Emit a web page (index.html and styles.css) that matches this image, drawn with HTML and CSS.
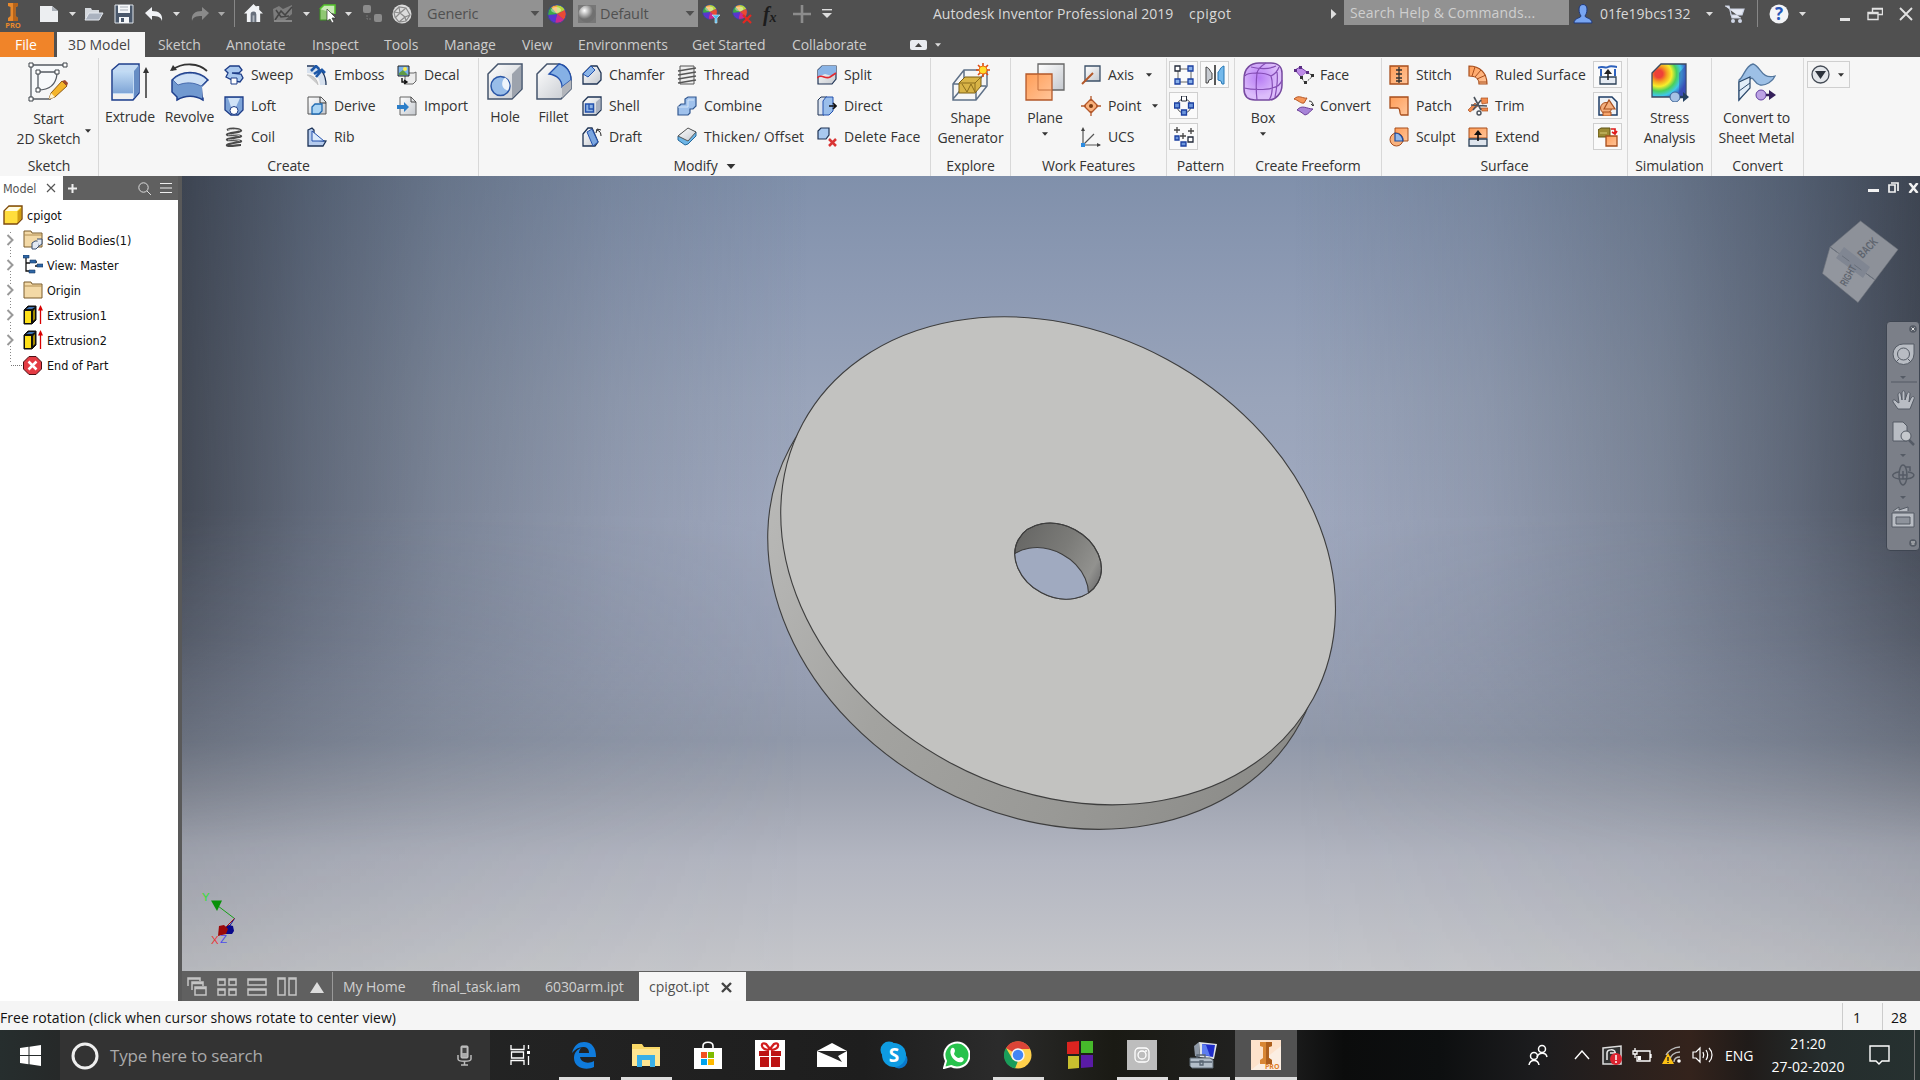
FILE: index.html
```html
<!DOCTYPE html>
<html lang="en">
<head>
<meta charset="utf-8">
<title>Autodesk Inventor Professional 2019</title>
<link rel="stylesheet" href="styles.css">
</head>
<body>
<svg class="defs" width="0" height="0">
  <defs>
    <linearGradient id="blue" x1="0" y1="0" x2="0" y2="1"><stop offset="0" stop-color="#c3dcf5"/><stop offset="1" stop-color="#7fa5d6"/></linearGradient>
    <linearGradient id="grey" x1="0" y1="0" x2="1" y2="1"><stop offset="0" stop-color="#fff"/><stop offset="1" stop-color="#c4c8ce"/></linearGradient>
    <linearGradient id="orange" x1="0" y1="0" x2="1" y2="1"><stop offset="0" stop-color="#ff9d57"/><stop offset="1" stop-color="#ffc59a"/></linearGradient>
    <radialGradient id="violet" cx=".4" cy=".4"><stop offset="0" stop-color="#b77cf5"/><stop offset="1" stop-color="#dcbcfb"/></radialGradient>
    <radialGradient id="stress" cx=".2" cy=".3" r=".95"><stop offset=".12" stop-color="#ee4038"/><stop offset=".25" stop-color="#f5a020"/><stop offset=".4" stop-color="#f6ee2c"/><stop offset=".55" stop-color="#49d05c"/><stop offset=".7" stop-color="#40c8e8"/><stop offset=".88" stop-color="#3c50c0"/></radialGradient>
    <radialGradient id="ball" cx=".35" cy=".3"><stop offset="0" stop-color="#fff"/><stop offset="1" stop-color="#707070"/></radialGradient>
  </defs>
  <symbol id="caret" viewBox="0 0 7 4"><path d="M0 0h7L3.500 4z" fill="currentColor"/></symbol>
  <symbol id="wheel" viewBox="0 0 20 20"><circle cx="10" cy="10" r="9.500" fill="#3555b8"/><path d="M10 10V1a9 9 0 0 1 8 5z" fill="#b6d53e"/><path d="M10 10 18 6a9 9 0 0 1-1 10z" fill="#e94a35"/><path d="M10 10l7 6a9 9 0 0 1-9 3z" fill="#c92a91"/><path d="M10 10 8 19a9 9 0 0 1-7-8z" fill="#5a35d0"/><path d="M10 10 1 11a9 9 0 0 1 3-8z" fill="#3faa48"/><path d="M10 10 4 3a9 9 0 0 1 6-2z" fill="#f4a93c"/><circle cx="10" cy="10" r="9.300" fill="none" stroke="#3d4c78" stroke-width="1"/><ellipse cx="9" cy="6" rx="5" ry="3" fill="#fff" opacity=".4"/></symbol>
  <symbol id="cube" viewBox="0 0 20 20"><path d="M1 6 6 1h13v13l-5 5H1z" fill="url(#grey)" stroke="#1e3354" stroke-width="1.300"/><path d="M14 6v12l4.500-4.500V2z" fill="#aab1bf"/></symbol>
  <symbol id="folder" viewBox="0 0 20 18"><path d="M1 3V1h7l1 2h10v14H1z" fill="#f3d9a6" stroke="#7a5c2c"/><path d="M1 5h18" stroke="#b28f55"/></symbol>
  <symbol id="extr" viewBox="0 0 20 20"><path d="M1 5 5 1h8v14l-4 4H1z" fill="#111" stroke="#111"/><path d="M2 6h6v12H2z" fill="#ffe11a"/><path d="M3 4l3-2h6L9 4z" fill="#3d70b0"/><path d="M10 6l2-2v10l-2 2z" fill="#a58a00"/><path d="M17.500 19V4" stroke="#d80000" stroke-width="1.300"/><path d="M15 5.500h5L17.500 0z" fill="#d80000"/></symbol>
  <symbol id="chev" viewBox="0 0 8 12"><path d="M1.500 1l5 5-5 5" fill="none" stroke="#999" stroke-width="2"/></symbol>
</svg>

<header class="titlebar">
  <svg width="20" height="25" viewBox="0 0 20 25"><path d="M5 0h10v3l-2.500 1v9L15 15v3H5v-3l2.500-2V4L5 3z" fill="#e8892c"/><path d="M10 0h5v3l-2.500 1v9L15 15v3h-5z" fill="#b7641a"/><text x="10" y="24.500" text-anchor="middle" class="logo-text">PRO</text></svg>
  <svg width="20" height="18" viewBox="0 0 20 18"><path d="M1 1h12l6 5v11H1z" fill="#eceef1"/><path d="M13 1v5h6z" fill="#aab0b8"/></svg>
  <svg class="caret" width="7" height="4"><use href="#caret"/></svg>
  <svg width="20" height="16" viewBox="0 0 20 16"><path d="M1 13V2h6l1 2h7v4" fill="#d4d8dd"/><path d="M5 7h14l-4 7H1z" fill="#aab2bf" stroke="#e4e8ee"/></svg>
  <svg width="20" height="20" viewBox="0 0 20 20"><path d="M1 1h18v18H1z" fill="#4a586b" stroke="#dde3ea"/><path d="M4 1h12v8H4z" fill="#f4f6f8"/><path d="M5 13h10v6H5z" fill="#f4f6f8"/><path d="M7 14h3v4H7z" fill="#4a586b"/><path d="M6 3h8M6 6h8" stroke="#a7aeb8"/></svg>
  <svg width="20" height="16" viewBox="0 0 20 16"><path d="M1 7l7-6v4c7 0 11 3 10 10-1-4-4-5-10-5v4z" fill="#f0f2f5"/></svg>
  <svg class="caret" width="7" height="4"><use href="#caret"/></svg>
  <svg width="20" height="16" viewBox="0 0 20 16"><path d="M19 7l-7-6v4C5 5 1 8 2 15c1-4 4-5 10-5v4z" fill="#8a8a8a"/></svg>
  <svg class="caret dim" width="7" height="4"><use href="#caret"/></svg>
  <i class="bar"></i>
  <svg width="19" height="19" viewBox="0 0 20 20"><path d="M10 0 0 10h3v9h14v-9h3l-4-4V2h-3v1z" fill="#f1f3f6"/><path d="M7 11a3 3 0 0 1 6 0v8H7z" fill="#68707c"/><path d="M9 12h2v7H9z" fill="#aeb4bd"/></svg>
  <svg width="20" height="19" viewBox="0 0 20 19"><path d="M0 5l6-3 4 3 9-4v9l-8 7-10 1z" fill="#7c7c7c"/><path d="M2 16 8 7l4 4 7-8M3 6l5 7 8-1" fill="none" stroke="#454545" stroke-width="1.600"/><path d="M1 17h18" stroke="#888" stroke-width="2"/></svg>
  <svg class="caret" width="7" height="4"><use href="#caret"/></svg>
  <svg width="19" height="20" viewBox="0 0 19 20"><path d="M2 4h12v12H2z" fill="#8fc773" stroke="#3d9022"/><path d="M2 5 6 1h11v9" fill="#c9e9b7" stroke="#53c22b" stroke-width="1.500"/><path d="M9 5v12l3-2 2 4 2-1-2-4h4z" fill="#fff" stroke="#333" stroke-width=".7"/></svg>
  <svg class="caret" width="7" height="4"><use href="#caret"/></svg>
  <svg width="20" height="19" viewBox="0 0 20 19"><rect x="1" y="1" width="8" height="8" rx="2" fill="#8b8b8b"/><rect x="12" y="10" width="8" height="8" rx="2" fill="#8b8b8b"/><path d="M5 11v4h5" stroke="#777" fill="none" stroke-dasharray="2 1"/></svg>
  <svg width="20" height="20" viewBox="0 0 20 20"><circle cx="10" cy="10" r="9.500" fill="#dcdcdc"/><path d="M2 8l5-5 7 1 4 7-4 6-7 1-4-5zM7 3l1 6 6-5M8 9l-6-1M8 9l5 4 5-2M13 13l1 4M8 9l-5 5M13 13l-6 5" fill="none" stroke="#8a8a8a" stroke-width="1.200"/></svg>
  <div class="combo"><span>Generic</span><svg width="10" height="5"><use href="#caret"/></svg></div>
  <svg width="20" height="20"><use href="#wheel"/></svg>
  <div class="combo"><svg width="18" height="18" viewBox="0 0 18 18"><path d="M0 0h18v18H0z" fill="#777"/><circle cx="9" cy="9" r="8.500" fill="url(#ball)"/></svg><span>Default</span><svg width="10" height="5"><use href="#caret"/></svg></div>
  <svg width="20" height="20" viewBox="0 0 20 20"><use href="#wheel" width="16" height="16"/><path d="M10 11h8l-3 3v5h-2v-5z" fill="#4db9ef" stroke="#d7f1ff" stroke-width=".6"/></svg>
  <svg width="21" height="20" viewBox="0 0 21 20"><use href="#wheel" width="16" height="16"/><path d="M11 11l8 8m0-8-8 8" stroke="#e32821" stroke-width="2.200"/></svg>
  <span class="fx">f<small>x</small></span>
  <svg width="18" height="18" viewBox="0 0 18 18"><path d="M9 0v18M0 9h18" stroke="#8c8c8c" stroke-width="2.600"/></svg>
  <svg width="10" height="9" viewBox="0 0 10 9"><path d="M0 .7h10" stroke="#ddd" stroke-width="1.400"/><path d="M0 4h10L5 9z" fill="#ddd"/></svg>
  <span class="title">Autodesk Inventor Professional 2019</span>
  <span class="title doc">cpigot</span>
  <svg width="6" height="10" viewBox="0 0 6 10"><path d="M0 0v10l5.500-5z" fill="#ddd"/></svg>
  <div class="search">Search Help &amp; Commands...</div>
  <svg width="20" height="20" viewBox="0 0 20 20"><path d="M6 5c0-6 8-6 8 0 0 4-1 5-2 7 0 2 7 2 7 7H1c0-5 7-5 7-7-1-2-2-3-2-7z" fill="#78a5f2" stroke="#1f397c"/></svg>
  <span class="user">01fe19bcs132</span>
  <svg class="caret" width="7" height="4"><use href="#caret"/></svg>
  <svg width="21" height="20" viewBox="0 0 21 20"><path d="M1 2h4l3 12h9M6 5h14l-2 6H7z" fill="#e5e9f3" stroke="#c9d0e0" stroke-width="1.200"/><circle cx="9" cy="17" r="2" fill="#cfd6e6"/><circle cx="16" cy="17" r="2" fill="#cfd6e6"/></svg>
  <i class="bar"></i>
  <svg width="20" height="20" viewBox="0 0 20 20"><circle cx="10" cy="10" r="9.500" fill="#f3f4f7"/><text x="10" y="16" text-anchor="middle" class="help-text">?</text></svg>
  <svg class="caret" width="7" height="4"><use href="#caret"/></svg>
  <svg class="win-min" width="10" height="3"><path d="M0 0h10v3H0z" fill="#e2e2e2"/></svg>
  <svg width="16" height="14" viewBox="0 0 16 14"><path d="M5.500 5V1.500h10v6H11M1 5.500h10v7H1zM1 6.500h10M5 2h10" fill="none" stroke="#e2e2e2" stroke-width="1.400"/></svg>
  <svg width="14" height="14" viewBox="0 0 14 14"><path d="M1 1l12 12M13 1 1 13" stroke="#e2e2e2" stroke-width="1.900"/></svg>
</header>

<nav class="tabs">
  <span class="file">File</span><span class="active">3D Model</span><span>Sketch</span><span>Annotate</span><span>Inspect</span><span>Tools</span><span>Manage</span><span>View</span><span>Environments</span><span>Get Started</span><span>Collaborate</span>
  <svg width="17" height="10" viewBox="0 0 17 10"><rect width="17" height="10" rx="2" fill="#e9ecf1"/><path d="M5 7h7L8.500 3z" fill="#444"/></svg>
  <svg class="caret" width="6" height="4"><use href="#caret"/></svg>
</nav>

<section class="ribbon">
  <div class="group g-sketch">
    <div class="body">
      <div class="big"><svg width="40" height="40" viewBox="0 0 40 40"><path d="M3 37V3h34M3 37h20M10 10h19v2C28 22 22 28 10 28z" fill="#f7f9fb" stroke="#555b63" stroke-width="1.300"/><path d="M1 1h4v4H1zM35 1h4v4h-4zM1 35h4v4H1zM8 8h4v4H8zM27 8h4v4h-4zM8 26h4v4H8z" fill="#fff" stroke="#3d4249"/><path d="M23 31 34 19l5 5-12 11-6 2z" fill="#f5b52a" stroke="#8d5a16"/><path d="M34 19l3-1 3 3-1 3z" fill="#a34b2c"/><path d="M21 37l2-6 4 4z" fill="#fff3d0"/></svg><span>Start<br>2D Sketch</span></div>
      <svg class="caret dark side" width="6" height="4"><use href="#caret"/></svg>
    </div>
    <div class="name">Sketch</div>
  </div>

  <div class="group g-create">
    <div class="body">
      <div class="big"><svg width="40" height="40" viewBox="0 0 40 40"><path d="M2 8 9 2h20v29l-6 7H2z" fill="#c3daf3" stroke="#1f3f8c" stroke-width="1.500"/><path d="M3 9h20v22H3z" fill="url(#blue)"/><path d="M3 32h20v5H3z" fill="#f1f1f1"/><path d="M24 9l5-6v27l-5 6z" fill="#668dc5"/><path d="M36 36V9" stroke="#333" stroke-width="1.500"/><path d="M33 11h6l-3-6z" fill="#333"/></svg><span>Extrude</span></div>
      <div class="big"><svg width="42" height="40" viewBox="0 0 42 40"><path d="M3 8C14 0 30 1 38 9" fill="none" stroke="#333" stroke-width="1.800"/><path d="M1 9 4 3l4 5z" fill="#333"/><path d="M3 18C12 8 30 8 39 18l-5 6v14c-8-5-18-5-26 0V35l-5-5z" fill="#7199d0" stroke="#1f3f8c" stroke-width="1.500"/><path d="M4 18C12 9 30 9 38 18l-6 6c-8-4-15-4-23-1z" fill="#cfe1f6" stroke="#2c4f9a" stroke-width=".7"/><path d="M33 25l6-6v12l-5 5z" fill="#f8f8f8"/></svg><span>Revolve</span></div>
      <div class="list">
        <div><svg width="20" height="20" viewBox="0 0 20 20"><path d="M1 5 6 1h9l3 4-3 3H8l9 1 2 4-3 4-6-1-8-4 2-4z" fill="#a8c8ee" stroke="#1d3c87" stroke-width="1.300"/><path d="M7 13h6v6H7z" fill="#fff" stroke="#1d3c87"/></svg>Sweep</div>
        <div><svg width="20" height="20" viewBox="0 0 20 20"><path d="M1 1h18v13l-5 5H7l-6-5z" fill="#7ea4d8" stroke="#1d3c87" stroke-width="1.300"/><path d="M4 2h12l-4 9H7z" fill="#cfe2f7"/><circle cx="10" cy="14.500" r="4" fill="#fff" stroke="#1d3c87"/></svg>Loft</div>
        <div><svg width="20" height="20" viewBox="0 0 20 20"><path d="M3 3c5-2.500 13-1 14 .5S4 6 3 7.500s13 0 14 1.500S4 11 3 12.500s13 0 14 1.500-13 2-14 4 11 0 14 0" fill="none" stroke="#4a4a4a" stroke-width="2.200"/><path d="M4 3c5-1 10-.5 12 .5M4 8c5-1 10 0 12 1M4 13c5-1 10 0 12 1" fill="none" stroke="#ddd" stroke-width=".8"/></svg>Coil</div>
      </div>
      <div class="list">
        <div><svg width="20" height="20" viewBox="0 0 20 20"><path d="M0 2C10 1 19 8 19 20h-6C13 12 8 8 0 8z" fill="#d7e1ee"/><path d="M0 1h7c8 3 12 9 12 19" fill="none" stroke="#1d3358" stroke-width="1.300"/><path d="M0 10c6 0 10 4 11 10" fill="#ccc" stroke="#bbb"/><path d="M4 6 9 1l3 3M7 9l6-4M9 12l6-7 3 3" fill="none" stroke="#1c57a8" stroke-width="2.600"/></svg>Emboss</div>
        <div><svg width="20" height="20" viewBox="0 0 20 20"><path d="M1 1h13l5 5v12H1z" fill="url(#grey)" stroke="#555"/><path d="M13 1v6h6" fill="none" stroke="#333"/><path d="M5 11l3-3h7v7l-3 3H5z" fill="#a9d4f4" stroke="#1f6ab1" stroke-width="1.300"/></svg>Derive</div>
        <div><svg width="20" height="20" viewBox="0 0 20 20"><path d="M1 3 5 1l2 2v10l12 1-3 5H1z" fill="#b5cbed" stroke="#1d3358" stroke-width="1.300"/><path d="M5 4v10h12z" fill="#dcebfc" stroke="#2351ad"/></svg>Rib</div>
      </div>
      <div class="list">
        <div><svg width="20" height="20" viewBox="0 0 20 20"><path d="M8 8h9l2-1v9l-3 3H8z" fill="#ececec" stroke="#666"/><path d="M1 1h11v10H1z" fill="#7bb2e9" stroke="#222"/><path d="M2 8l4-3 5 5H2z" fill="#5f9b45"/><circle cx="8" cy="4" r="2" fill="#ffec4d"/><path d="M5 13v4h5m-3-2 3 2-3 2" fill="none" stroke="#111" stroke-width="1.400"/></svg>Decal</div>
        <div><svg width="20" height="20" viewBox="0 0 20 20"><path d="M3 1h11l5 5v13H3z" fill="url(#grey)" stroke="#666"/><path d="M14 1v5h5" fill="none" stroke="#444"/><path d="M0 9h7V6l5 5-5 5v-3H0z" fill="#2b7ec9"/></svg>Import</div>
      </div>
    </div>
    <div class="name">Create</div>
  </div>

  <div class="group g-modify">
    <div class="body">
      <div class="big"><svg width="38" height="40" viewBox="0 0 38 40"><path d="M2 12 12 2h24v25L26 37H2z" fill="url(#grey)" stroke="#44546c" stroke-width="1.500"/><path d="M26 12v24l9-9V3z" fill="#9da3ad"/><circle cx="14.500" cy="24" r="9.500" fill="#98bde9" stroke="#2a56a6" stroke-width="1.500"/><path d="M19 15.500a9.500 9.500 0 0 1 3 13c-6-1-8-8-3-13z" fill="#eef4fb"/></svg><span>Hole</span></div>
      <div class="big"><svg width="38" height="40" viewBox="0 0 38 40"><path d="M2 12 12 2h12c7 1 12 8 12 16v9L26 37H2z" fill="url(#grey)" stroke="#44546c" stroke-width="1.500"/><path d="M14 12 24 2c7 1 12 8 12 16l-9 7c0-7-5-12-13-13z" fill="#86b1e5" stroke="#2351ad" stroke-width="1.300"/><path d="M27 25v11l9-9v-9z" fill="#b2b5bb"/></svg><span>Fillet</span></div>
      <div class="list">
        <div><svg width="20" height="20" viewBox="0 0 20 20"><path d="M1 9 9 1h6l4 7v7l-4 4H1z" fill="url(#grey)" stroke="#1e3354" stroke-width="1.300"/><path d="M1 9 9 1l4 4-7 7z" fill="#8bb5e8" stroke="#2351ad"/></svg>Chamfer</div>
        <div><svg width="20" height="20" viewBox="0 0 20 20"><use href="#cube"/><path d="M3.500 8h8v8h-8z" fill="#8cb2e5" stroke="#2351ad" stroke-width="1.500"/><path d="M7 8v5h4" fill="none" stroke="#2351ad" stroke-width="1.300"/></svg>Shell</div>
        <div><svg width="20" height="20" viewBox="0 0 20 20"><path d="M1 7 6 1h4l6 14-3 4H1z" fill="url(#grey)" stroke="#1e3354" stroke-width="1.300"/><path d="M5 5l5-3 6 13-5 4z" fill="#7ba6df" stroke="#2351ad"/><path d="M19 9c0-3-1-5-4-6m-1 3 1-4 4 1" fill="none" stroke="#222"/></svg>Draft</div>
      </div>
      <div class="list">
        <div><svg width="20" height="20" viewBox="0 0 20 20"><path d="M3 1h14v18H3z" fill="#eee" stroke="#555"/><path d="M1 6l18-3M1 10l18-3M1 14l18-3M1 18l18-3" stroke="#555" stroke-width="1.500"/></svg>Thread</div>
        <div><svg width="20" height="20" viewBox="0 0 20 20"><path d="M1 11l3-3h4V3l3-2h8v9l-3 3h-3v4l-2 2H1z" fill="#9fc1ec" stroke="#31578f" stroke-width="1.200"/><path d="M1 11h10V4h6" fill="none" stroke="#d4e5f8"/></svg>Combine</div>
        <div class="wide"><svg width="20" height="20" viewBox="0 0 20 20"><path d="M1 9v4l7 5 3-1 8-8V5l-8-3z" fill="#6db5e6" stroke="#25689a"/><path d="M1 9 11 1l8 4-8 9z" fill="url(#grey)" stroke="#555"/></svg>Thicken/ Offset</div>
      </div>
      <div class="list">
        <div><svg width="20" height="20" viewBox="0 0 20 20"><path d="M1 5l4-4h14v13l-4 5H1z" fill="url(#grey)" stroke="#1e3354" stroke-width="1.200"/><path d="M1 5l4-4h14v7l-4 3-7-2-7 3z" fill="#8ab4e6"/><path d="M0 13c5-5 8 2 13-1l6-4" fill="none" stroke="#e22830" stroke-width="1.600"/></svg>Split</div>
        <div><svg width="20" height="20" viewBox="0 0 20 20"><path d="M1 4 4 1h6v15l-3 3H1z" fill="#d9e2ef" stroke="#1e3354"/><path d="M6 5l3-4h7v14l-4 4H6z" fill="#9abeeb" stroke="#2351ad"/><path d="M12 10h7m-3-3 3 3-3 3" fill="none" stroke="#111" stroke-width="1.600"/></svg>Direct</div>
        <div class="wide"><svg width="20" height="20" viewBox="0 0 20 20"><path d="M1 4l3-3h8v7l-3 4H1z" fill="#a9c9f0" stroke="#1e3354" stroke-width="1.200"/><path d="M12 12l7 7m0-7-7 7" stroke="#d93434" stroke-width="2.500"/></svg>Delete Face</div>
      </div>
    </div>
    <div class="name">Modify <svg class="caret dark" width="10" height="5"><use href="#caret"/></svg></div>
  </div>

  <div class="group g-explore">
    <div class="body">
      <div class="big"><svg width="40" height="40" viewBox="0 0 40 40"><path d="M2 22 13 8h23v16L25 38H2zM2 22h23v16M25 22 36 8M13 8v15M2 37l11-13h22" fill="none" stroke="#5f7188" stroke-width="1.500"/><path d="M8 21l6-6h16v9l-6 7H8z" fill="#d9b447" stroke="#7b5e14"/><path d="M8 21h16l6-6M24 21v9M11 22l5 8 4-8 4 8" fill="none" stroke="#8b6d1c"/><path d="M32 1v14M25 8h14M27 3l10 10M37 3 27 13" stroke="#df4b12" stroke-width="1.600"/><circle cx="32" cy="8" r="4" fill="#ffdc2c" stroke="#ec7314"/></svg><span>Shape<br>Generator</span></div>
    </div>
    <div class="name">Explore</div>
  </div>

  <div class="group g-work">
    <div class="body">
      <div class="big"><svg width="40" height="40" viewBox="0 0 40 40"><path d="M13 2h26v26H13z" fill="url(#grey)" stroke="#666" stroke-width="1.300"/><path d="M1 12h26v26H1z" fill="url(#orange)" stroke="#b3582a" stroke-width="1.300"/><path d="M13 12v16h14" fill="none" stroke="#c4713f"/></svg><span>Plane</span><svg class="caret dark" width="6" height="4"><use href="#caret"/></svg></div>
      <div class="list">
        <div><svg width="20" height="20" viewBox="0 0 20 20"><path d="M4 1h15v15H4z" fill="url(#grey)" stroke="#3c5068" stroke-width="1.300"/><path d="M1 19 12 8" stroke="#b3582a" stroke-width="2"/></svg>Axis<svg class="caret dark c1" width="6" height="4"><use href="#caret"/></svg></div>
        <div><svg width="20" height="20" viewBox="0 0 20 20"><path d="M10 3l7 7-7 7-7-7zM10 0v5M10 15v5M0 10h5M15 10h5" fill="#f9b07b" stroke="#b3582a" stroke-width="1.300"/><circle cx="10" cy="10" r="2" fill="#7c3a10"/></svg>Point<svg class="caret dark c2" width="6" height="4"><use href="#caret"/></svg></div>
        <div><svg width="20" height="20" viewBox="0 0 20 20"><path d="M2 18V2M2 18h17M2 18 13 7" fill="none" stroke="#555" stroke-width="1.200"/><path d="M0 4h4L2 0zM16 16v4l4-2z" fill="#444"/><path d="M0 16h4v4H0z" fill="#2b8be0"/></svg>UCS</div>
      </div>
    </div>
    <div class="name">Work Features</div>
  </div>

  <div class="group g-pattern">
    <div class="body">
      <div class="tile"><svg width="20" height="20" viewBox="0 0 20 20"><path d="M4 4h13v13H4z" fill="none" stroke="#666"/><path d="M1 1h5v5H1z" fill="#fff" stroke="#222a3a" stroke-width="1.300"/><path d="M14 1h5v5h-5zM1 14h5v5H1zM14 14h5v5h-5z" fill="#8ab1ea" stroke="#1b3fa0" stroke-width="1.300"/></svg></div>
      <div class="tile"><svg width="20" height="20" viewBox="0 0 20 20"><path d="M1 2c4 1 4 5 6 6v6l-3 1-1 3H1z" fill="#c8ccd2" stroke="#444"/><path d="M10 0v20" stroke="#222" stroke-width="1.500"/><path d="M19 1c-4 1-4 5-6 6v8l3 1 1 3h2z" fill="#74b9eb" stroke="#2577b5"/></svg></div>
      <div class="tile"><svg width="20" height="20" viewBox="0 0 20 20"><circle cx="10" cy="10" r="7" fill="none" stroke="#555"/><path d="M7.500 0h5v5h-5z" fill="#fff" stroke="#222a3a"/><path d="M.5 7h5v5h-5zM14.500 7h5v5h-5zM7.500 14h5v5h-5z" fill="#6b95db" stroke="#1b3fa0" stroke-width="1.300"/></svg></div>
      <i></i>
      <div class="tile"><svg width="20" height="20" viewBox="0 0 20 20"><path d="M3 0v6M0 3h6M17 1v6M14 4h6M9 6v6M6 9h6" stroke="#444" stroke-width="1.300"/><path d="M1 9h4v4H1zM7 15h5v4H7z" fill="#6b95db" stroke="#1b3fa0" stroke-width="1.300"/><path d="M14 10h5v5h-5z" fill="#fff" stroke="#222a3a" stroke-width="1.300"/></svg></div>
    </div>
    <div class="name">Pattern</div>
  </div>

  <div class="group g-free">
    <div class="body">
      <div class="big"><svg width="40" height="40" viewBox="0 0 40 40"><path d="M1 17C1 6 8 1 16 1h12c7 0 11 4 11 10v12c0 9-7 15-13 15H12C4 38 1 33 1 27z" fill="url(#violet)" stroke="#76499f" stroke-width="1.500"/><path d="M2 14c2-4 20-4 26 0 2 6 2 19-2 24M28 14c4-2 7-6 8-9M1 26c8 2 22 2 28 0 5-1 9-4 10-8M14 11c-1 8-1 18 0 27M14 11c1-4 4-7 9-10M8 5c9 2 19 2 25-1M34 10c1 7 0 15-2 25" fill="none" stroke="#854eb5" stroke-width="1.200"/></svg><span>Box</span><svg class="caret dark" width="6" height="4"><use href="#caret"/></svg></div>
      <div class="list">
        <div><svg width="20" height="20" viewBox="0 0 20 20"><path d="M6 2l7 5-6 5-6-7z" fill="#bd8be8" stroke="#7a43a8"/><path d="M13 7l6 4-8 7-4-6" fill="#f5f5f5" stroke="#444" stroke-dasharray="2 1"/><path d="M5 1h3v3H5zM0 4h3v3H0zM12 6h3v3h-3z" fill="#5a2d83"/><path d="M17 9h3v3h-3zM10 16h3v3h-3zM6 11h3v3H6z" fill="#333"/></svg>Face</div>
        <div><svg width="20" height="20" viewBox="0 0 20 20"><path d="M0 3c5-5 9 0 13-1L10 7C7 8 4 4 0 3z" fill="#f5975a" stroke="#b65624"/><path d="M3 14c5-6 10-1 16-1-3 2-4 5-8 6-3-2-5-4-8-5z" fill="#a784d8" stroke="#6d4198"/><path d="M15 5c3 0 4 2 4 5m-2-2 2 2 2-3" fill="none" stroke="#333"/></svg>Convert</div>
      </div>
    </div>
    <div class="name">Create Freeform</div>
  </div>

  <div class="group g-surface">
    <div class="body">
      <div class="list">
        <div><svg width="20" height="20" viewBox="0 0 20 20"><path d="M1 1h18v18H1z" fill="url(#orange)" stroke="#a74e1d" stroke-width="1.300"/><path d="M10 2v16M7 5h6M7 9h6M7 13h6M7 16h6" stroke="#333" stroke-width="1.300"/></svg>Stitch</div>
        <div><svg width="20" height="20" viewBox="0 0 20 20"><path d="M1 1h18v18h-7c-2-1 0-6-3-7H1z" fill="url(#orange)" stroke="#a74e1d" stroke-width="1.300"/></svg>Patch</div>
        <div><svg width="20" height="20" viewBox="0 0 20 20"><path d="M6 1h13v13H6z" fill="url(#orange)" stroke="#a74e1d"/><circle cx="7.500" cy="12.500" r="6.500" fill="#f8b27e" stroke="#a74e1d"/><path d="M6 6c5 0 8 4 8 8H6z" fill="#93b8e9" stroke="#1d4b9b" stroke-width="1.200"/></svg>Sculpt</div>
      </div>
      <div class="list">
        <div class="ruled"><svg width="20" height="20" viewBox="0 0 20 20"><path d="M1 1c11 0 18 7 18 18h-8c0-6-3-8-10-8z" fill="url(#orange)" stroke="#a74e1d" stroke-width="1.200"/><path d="M4 11 7 2M7 12l6-7M9 14l9-4M11 17l8 0" stroke="#a74e1d"/></svg>Ruled Surface</div>
        <div><svg width="20" height="20" viewBox="0 0 20 20"><path d="M0 14 7 7l3 3-8 6zM13 2h7v5l-6 1zM13 12h7v3h-6z" fill="#f08b4e" stroke="#a74e1d" stroke-width=".7"/><path d="M6 1l7 13M13 4 5 14M3 9l16 1" stroke="#4c535c" stroke-width="1.600"/><circle cx="11" cy="17" r="2" fill="none" stroke="#4c535c" stroke-width="1.400"/></svg>Trim</div>
        <div><svg width="20" height="20" viewBox="0 0 20 20"><path d="M1 1h18v10H1z" fill="url(#orange)" stroke="#a74e1d"/><path d="M1 12h18v7H1z" fill="#dfe5ed" stroke="#2b4057" stroke-width="1.300"/><path d="M10 14V6" stroke="#111" stroke-width="1.600"/><path d="M6 8h8l-4-5z" fill="#111"/></svg>Extend</div>
      </div>
      <div class="tiles">
        <div class="tile"><svg width="20" height="20" viewBox="0 0 20 20"><path d="M0 3c5-3 7 1 10-1s6 0 9 0M3 4v7M17 4v7" fill="none" stroke="#2d61bd" stroke-width="2"/><path d="M2 12h16v7H2z" fill="#e6ebf2" stroke="#2b4057" stroke-width="1.300"/><path d="M10 15V7" stroke="#222" stroke-width="1.600"/><path d="M6 9h8l-4-5z" fill="#222"/></svg></div>
        <div class="tile"><svg width="20" height="20" viewBox="0 0 20 20"><path d="M1 1h13l5 5v13H1z" fill="#eef1f5" stroke="#1e3d66" stroke-width="1.500"/><circle cx="8" cy="12" r="5.500" fill="#f3ae7d" stroke="#a74e1d"/><path d="M6 13l5-9 6 9z" fill="#f3ae7d" stroke="#a74e1d" stroke-width="1.200"/><path d="M5 16h8v4H5z" fill="#f5a36a" stroke="#a74e1d"/></svg></div>
        <div class="tile"><svg width="20" height="20" viewBox="0 0 20 20"><path d="M0 3l3-2h9v9H0z" fill="#9b8a34" stroke="#5f5315"/><path d="M2 6h7" stroke="#d8ca77"/><path d="M8 9h11v10H8z" fill="url(#orange)" stroke="#a74e1d" stroke-width="1.300"/><path d="M13 2h4v4m-3-1 3 2 2-3" fill="none" stroke="#e01b1b" stroke-width="1.700"/></svg></div>
      </div>
    </div>
    <div class="name">Surface</div>
  </div>

  <div class="group g-sim">
    <div class="body">
      <div class="big"><svg width="40" height="40" viewBox="0 0 40 40"><path d="M2 11 11 2h25v33H2z" fill="url(#stress)" stroke="#3b4a60" stroke-width="1.300"/><path d="M29 11l7-8v26l-7 6z" fill="#3349ac" opacity=".5"/><circle cx="25" cy="35" r="5" fill="#a7c2e5" stroke="#3b6396"/><path d="M30 35h5" stroke="#24405f" stroke-width="2.500"/><path d="M33 30v10l6-5z" fill="#24405f"/></svg><span>Stress<br>Analysis</span></div>
    </div>
    <div class="name">Simulation</div>
  </div>

  <div class="group g-conv">
    <div class="body">
      <div class="big"><svg width="40" height="40" viewBox="0 0 40 40"><path d="M2 18C7 15 8 4 16 2c8 2 8 16 22 12-2 5-9 10-15 9-7-2-6-9-10-6-3 1-2 11-11 21z" fill="#9dc0e6" stroke="#54779e" stroke-width="1.300"/><path d="M2 20l11-5v11L2 38z" fill="#e2edf8" stroke="#2c496b" stroke-width="1.200"/><path d="M2 29l11-8" stroke="#2c496b"/><circle cx="24" cy="33" r="5" fill="#bca2e4" stroke="#6240a0"/><path d="M29 33h5" stroke="#35205b" stroke-width="2.500"/><path d="M32 28v10l7-5z" fill="#35205b"/></svg><span>Convert to<br>Sheet Metal</span></div>
    </div>
    <div class="name">Convert</div>
  </div>

  <div class="display"><svg width="19" height="19" viewBox="0 0 19 19"><circle cx="9.500" cy="9.500" r="8.500" fill="#e3e6ea" stroke="#444b55" stroke-width="1.300"/><path d="M4 6h11l-5.500 8z" fill="#2c323b"/></svg><svg class="caret dark" width="6" height="4"><use href="#caret"/></svg></div>
</section>

<main class="work">
  <aside class="browser">
    <div class="panel-head">
      <div class="panel-tab">Model <svg width="10" height="10" viewBox="0 0 10 10"><path d="M1 1l8 8M9 1 1 9" stroke="#555" stroke-width="1.200"/></svg></div>
      <svg class="add" width="9" height="9" viewBox="0 0 9 9"><path d="M4.500 0v9M0 4.500h9" stroke="#eee" stroke-width="2"/></svg>
      <svg width="13" height="13" viewBox="0 0 13 13"><circle cx="5.500" cy="5.500" r="4.700" fill="none" stroke="#ddd"/><path d="M9 9l4 4" stroke="#ddd"/></svg>
      <svg width="12" height="10" viewBox="0 0 12 10"><path d="M0 .5h12M0 5h12M0 9.500h12" stroke="#eee" stroke-width="1.200"/></svg>
    </div>
    <ul class="tree">
      <li class="root"><svg width="20" height="20" viewBox="0 0 20 20"><path d="M1 6 6 1h13v13l-5 5H1z" fill="#ffdd3c" stroke="#7d4a10" stroke-width="1.400"/><path d="M2 6l4-4h12l-4 4z" fill="#fffbe2"/><path d="M14.500 6.500 18 3v11l-3.500 4z" fill="#d09c11"/></svg>cpigot</li>
      <li><svg class="chev" width="8" height="12"><use href="#chev"/></svg><svg width="20" height="20" viewBox="0 0 20 20"><use href="#folder" width="20" height="18"/><path d="M9 13l3-2h4v5l-3 3H9z" fill="#e2e9f3" stroke="#394d6c"/><path d="M14 9h5v5l-3 2" fill="#e2e9f3" stroke="#394d6c"/></svg>Solid Bodies(1)</li>
      <li><svg class="chev" width="8" height="12"><use href="#chev"/></svg><svg width="20" height="20" viewBox="0 0 20 20"><path d="M3 3v13h4M3 8h4M11 7h3M12 11h3" fill="none" stroke="#111" stroke-width="1.300"/><path d="M0 0h6v3H0zM7 5h6v3H7zM14 9h6v3h-6zM6 15h6v3H6z" fill="#2e66a5" stroke="#173a63" stroke-width=".6"/></svg>View: Master</li>
      <li><svg class="chev" width="8" height="12"><use href="#chev"/></svg><svg width="20" height="18"><use href="#folder"/></svg>Origin</li>
      <li><svg class="chev" width="8" height="12"><use href="#chev"/></svg><svg width="20" height="20"><use href="#extr"/></svg>Extrusion1</li>
      <li><svg class="chev" width="8" height="12"><use href="#chev"/></svg><svg width="20" height="20"><use href="#extr"/></svg>Extrusion2</li>
      <li class="end"><i></i><svg width="19" height="19" viewBox="0 0 19 19"><path d="M6 .5h7L18.500 6v7L13 18.500H6L.5 13V6z" fill="#e43b43" stroke="#4b1015"/><path d="M5.500 5.500l8 8m0-8-8 8" stroke="#fff" stroke-width="2.500"/></svg>End of Part</li>
    </ul>
  </aside>

  <div class="stage">
    <div class="viewport">
      <div class="vignette"></div>
      <svg class="scene" viewBox="182 176 1738 795">
        <defs>
          <linearGradient id="side" x1="-290" y1="0" x2="290" y2="0" gradientUnits="userSpaceOnUse"><stop offset="0" stop-color="#b9b9b7"/><stop offset=".12" stop-color="#b2b2b0"/><stop offset=".35" stop-color="#a3a3a0"/><stop offset=".7" stop-color="#999996"/><stop offset="1" stop-color="#8c8c89"/></linearGradient>
          <linearGradient id="bore" x1="-45" y1="0" x2="45" y2="0" gradientUnits="userSpaceOnUse"><stop offset="0" stop-color="#686866"/><stop offset=".5" stop-color="#7b7b78"/><stop offset=".88" stop-color="#92928f"/><stop offset="1" stop-color="#777"/></linearGradient>
          <clipPath id="holeclip"><ellipse rx="45.200" ry="35.700" transform="translate(1058.100 561.100) rotate(28.300)"/></clipPath>
        </defs>
        <g stroke="#3e3e3e" stroke-width="1.100">
          <ellipse rx="289.900" ry="229" transform="translate(1045.100 585.300) rotate(28.300)" fill="url(#side)"/>
          <ellipse rx="289.900" ry="229" transform="translate(1058.100 560.800) rotate(28.300)" fill="#c2c2c0"/>
          <ellipse rx="45.200" ry="35.700" transform="translate(1058.100 561.100) rotate(28.300)" fill="url(#bore)"/>
          <g clip-path="url(#holeclip)"><ellipse rx="45.200" ry="35.700" transform="translate(1045.100 585.600) rotate(28.300)" fill="#a0aac0"/></g>
          <ellipse rx="45.200" ry="35.700" transform="translate(1058.100 561.100) rotate(28.300)" fill="none"/>
        </g>
        <g class="viewcube">
          <path d="M1860.500 221 1898 249.500 1875 280 1830 247z" fill="#8d9199" stroke="#6f747c" stroke-width=".6"/>
          <path d="M1830 247l45 33-17 22.500-35.500-29z" fill="#92969e" stroke="#6f747c" stroke-width=".6"/>
          <path d="M1844 247l26 20-7 11-27-20z" fill="#808692"/>
          <path d="M1830 247l45 33" stroke="#69707b" stroke-dasharray="9 6"/>
          <text transform="translate(1862.500 259) rotate(-46)" class="cube-text" textLength="23" lengthAdjust="spacingAndGlyphs">BACK</text>
          <text transform="translate(1846 287) rotate(-60)" class="cube-text small" textLength="22" lengthAdjust="spacingAndGlyphs">RIGHT</text>
        </g>
        <g class="triad">
          <path d="M234.500 918.500 218 906" stroke="#16a016"/><path d="M211 900.500h11l-5 10.500z" fill="#099109"/>
          <path d="M234.500 918.500 229 927" stroke="#1010a0"/><path d="M225 927l4-2 4 1 1 5-2 3-7 0z" fill="#08088a"/><path d="M234.500 918.500 224 929" stroke="#a01010"/><path d="M219 926l5-1 4 4-2 5-8 2z" fill="#9b0808"/>
          <text x="202" y="901" fill="#32df32">Y</text><text x="211" y="944" fill="#e63c3c">X</text><text x="220" y="943" fill="#4d4dea">Z</text>
        </g>
      </svg>
      <div class="mdi">
        <svg width="11" height="3"><path d="M0 0h11v3H0z" fill="#f2f2f2"/></svg>
        <svg width="11" height="11" viewBox="0 0 11 11"><path d="M1 3h6v7H1zM3 1h7v8" fill="none" stroke="#f2f2f2" stroke-width="1.700"/></svg>
        <svg width="11" height="10" viewBox="0 0 11 10"><path d="M1.500 0l8 10M9.500 0l-8 10" stroke="#f2f2f2" stroke-width="2.500"/></svg>
      </div>
      <div class="navbar">
        <svg width="33" height="229" viewBox="0 0 33 229" fill="#b8bcc3" stroke="#555b65">
          <circle cx="26" cy="7" r="3.800" fill="#555b65" stroke="none"/><path d="M24.500 5.500l3 3m0-3-3 3" stroke="#ddd"/>
          <path d="M16 22h11v10a10 10 0 0 1-21 0 10 10 0 0 1 10-10z"/><circle cx="16.500" cy="32" r="6"/><path d="M12 37l-3 3M21 37l3 3"/>
          <path d="M13 54h6l-3 3z" fill="#555b65" stroke="none"/><path d="M4 60h26" stroke="#555b65"/>
          <path d="M11 87 6 80c-1-3 2-3 4 0l2 1-1-8c0-3 3-3 3 0l1 5v-7c0-3 3-3 3 0v7l2-6c1-3 3-2 3 0l-1 8 2-4c2-3 4-1 3 1l-4 10h-12z"/>
          <path d="M6 100h10l4 4v15H6z"/><circle cx="19" cy="114" r="5" fill="#c5c8cd"/><path d="M22 118l5 5" stroke-width="2.500"/>
          <path d="M13 132h6l-3 3z" fill="#555b65" stroke="none"/>
          <g fill="none" stroke-width="1.500"><ellipse cx="16" cy="153" rx="4" ry="10"/><path d="M12 150c-9 1-9 7 4 7s14-6 5-7M16 149v8M12 153h8"/><path d="M18 145h5v4"/></g>
          <path d="M13 174h6l-3 3z" fill="#555b65" stroke="none"/>
          <path d="M5 191h22v14H5z"/><path d="M9 195h14v7H9z" fill="#8e939c"/><path d="M6 189l6-4v3l9-3v4"/>
          <circle cx="26" cy="221" r="3.800" fill="#555b65" stroke="none"/><path d="M24 220h4M24.500 222h3" stroke="#ddd"/>
        </svg>
      </div>
    </div>
    <div class="doctabs">
      <div class="arrange">
        <svg width="20" height="20" viewBox="0 0 20 20"><path d="M1 9V1h12v3M5 13V5h11v4M8 10h11v8H8zM8 11.500h11M5 6.500h11M1 2h12" fill="none" stroke="#c4c4c4" stroke-width="1.500"/></svg>
        <svg width="20" height="20" viewBox="0 0 20 20"><path d="M1 2h7v6H1zM12 2h7v6h-7zM1 12h7v6H1zM12 12h7v6h-7zM1 3h7M12 3h7M1 13h7M12 13h7" fill="none" stroke="#c4c4c4" stroke-width="1.500"/></svg>
        <svg width="20" height="20" viewBox="0 0 20 20"><path d="M1 2h18v6H1zM1 12h18v6H1zM1 3h18M1 13h18" fill="none" stroke="#c4c4c4" stroke-width="1.500"/></svg>
        <svg width="20" height="20" viewBox="0 0 20 20"><path d="M1 1h7v17H1zM12 1h7v17h-7zM1 2h7M12 2h7" fill="none" stroke="#c4c4c4" stroke-width="1.500"/></svg>
        <svg width="14" height="11" viewBox="0 0 14 11"><path d="M0 11h14L7 0z" fill="#ddd"/></svg>
      </div>
      <span>My Home</span><span>final_task.iam</span><span>6030arm.ipt</span>
      <span class="current">cpigot.ipt <svg width="11" height="11" viewBox="0 0 11 11"><path d="M1 1l9 9M10 1l-9 9" stroke="#444" stroke-width="2.400"/></svg></span>
    </div>
  </div>
</main>

<footer class="status"><span>Free rotation (click when cursor shows rotate to center view)</span><b>1</b><b>28</b></footer>

<div class="taskbar">
  <div class="start"><svg width="21" height="21" viewBox="0 0 21 21"><path d="M0 3l8.500-1.200V10H0zM9.500 1.700 21 0v10H9.500zM0 11h8.500v8.200L0 18zM9.500 11H21v10L9.500 19.300z" fill="#fff"/></svg></div>
  <div class="cortana"><svg width="28" height="28" viewBox="0 0 28 28"><circle cx="14" cy="14" r="12" fill="none" stroke="#eee" stroke-width="3"/></svg><span>Type here to search</span><svg width="15" height="21" viewBox="0 0 15 21"><rect x="4" y="1" width="7" height="12" rx="1" fill="#aaa" stroke="#ccc"/><path d="M5.500 3h4v5h-4z" fill="#444"/><path d="M1 10v4c0 3 13 3 13 0v-4M7.500 16v4M4 20h7" fill="none" stroke="#bbb" stroke-width="1.500"/></svg></div>
  <div class="taskview"><svg width="21" height="20" viewBox="0 0 21 20"><path d="M1 0v4.500h13V0M1 20v-4.500h13V20M1.500 7h12v6h-12zM18.500 0v4M18.500 11v9" fill="none" stroke="#fff" stroke-width="1.300"/><path d="M17 6h3v3h-3z" fill="#fff"/></svg></div>
  <div class="apps">
    <div class="run"><svg width="26" height="28" viewBox="0 0 26 28"><path d="M1 12C3 4 8 1 13 1c8 0 12 6 12 15H9c1 6 9 7 14 4v6c-8 4-20 1-20-9 0-6 4-9 7-10-1 1-2 3-2 5h10c0-5-3-6-6-6-4 0-8 2-11 6z" fill="#0f7bdc"/></svg></div>
    <div class="run"><svg width="28" height="24" viewBox="0 0 28 24"><path d="M0 1h10l2 3h16v19H0z" fill="#f9d867"/><path d="M0 6h28v17H0z" fill="#ffe692"/><path d="M5 12h18v12h-5v-7h-8v7H5z" fill="#3ab0e8"/></svg></div>
    <div><svg width="30" height="30" viewBox="0 0 30 30"><path d="M10 9V6c0-5 10-5 10 0v3" fill="none" stroke="#fff" stroke-width="1.600"/><path d="M1 8h28v21l-28 0z" fill="#fff"/><path d="M8 12h6v6H8z" fill="#f25022"/><path d="M15 12h6v6h-6z" fill="#7fba00"/><path d="M8 19h6v6H8z" fill="#00a4ef"/><path d="M15 19h6v6h-6z" fill="#ffb900"/></svg></div>
    <div><svg width="30" height="30" viewBox="0 0 30 30"><path d="M0 0h30v30H0z" fill="#fff"/><path d="M4 11h10v5H4zM16 11h10v5H16zM5 17h9v10H5zM16 17h9v10h-9z" fill="#bd1414"/><path d="M14 10C4 9 6 1 11 4l4 5 4-5c5-3 7 5-3 6" fill="none" stroke="#d21c1c" stroke-width="2.300"/></svg></div>
    <div><svg width="30" height="24" viewBox="0 0 30 24"><path d="M0 8 15 0l15 8v16H0z" fill="#fff"/><path d="M0 8h30l-9 5 4 6-11-5z" fill="#242424"/></svg></div>
    <div><svg width="28" height="28" viewBox="0 0 28 28"><circle cx="9" cy="9" r="8.500" fill="#0f9ce0"/><circle cx="19" cy="19" r="8.500" fill="#0a78cb"/><circle cx="14" cy="14" r="12" fill="#0e9be2"/><text x="14" y="21" text-anchor="middle" class="skype">S</text></svg></div>
    <div><svg width="27" height="28" viewBox="0 0 27 28"><path d="M1 27l2-7A12.500 12.500 0 1 1 8 25z" fill="#27c24c" stroke="#fff" stroke-width="2"/><path d="M8 8c2-3 4 0 4 2l-1 3c1 2 3 4 5 4l2-1c3 1 4 3 1 5C13 23 5 14 8 8z" fill="#fff"/></svg></div>
    <div class="run"><svg width="28" height="28" viewBox="0 0 28 28"><circle cx="14" cy="14" r="13.500" fill="#ffd04b"/><path d="M14 14 2 7a13.500 13.500 0 0 1 24 1H14z" fill="#db4437"/><path d="M2 7l7 12 5 1-3 7.500A13.500 13.500 0 0 1 2 7z" fill="#1a9d5a"/><circle cx="14" cy="14" r="6" fill="#4285f4" stroke="#f4f4f4" stroke-width="1.500"/></svg></div>
    <div><svg width="28" height="30" viewBox="0 0 28 30"><path d="M1 2l12-1v13H1z" fill="#db2420"/><path d="M15 1h12v12H15z" fill="#46b92b"/><path d="M2 16h11v12l-11 1z" fill="#c8c02f"/><path d="M15 15h12v12l-12 1z" fill="#5a1ba6"/></svg></div>
    <div class="run"><svg width="30" height="30" viewBox="0 0 30 30"><path d="M0 0h30v30H0z" fill="#bdbdbd"/><g fill="none" stroke="#fff" stroke-width="1.300"><rect x="8" y="8" width="14" height="14" rx="4"/><circle cx="15" cy="15" r="4"/></g><circle cx="19" cy="11" r="1" fill="#fff"/></svg></div>
    <div class="run"><svg width="30" height="30" viewBox="0 0 30 30"><path d="M10 2l18 2-3 15-14-2z" fill="#dfe3e8"/><path d="M13 4l13 1-2 12-11-2z" fill="#1f2cc9"/><path d="M17 5l4 11-8-1V4z" fill="#5d7df0"/><path d="M10 2 5 6l1 10 5 1z" fill="#8e98a5"/><path d="M1 18h20l3 2v8H3l-2-2z" fill="#b3bec9" stroke="#5e6a75"/><path d="M8 18v-3h8v3M1 22h22M11 21h3v4h-3z" fill="none" stroke="#596673" stroke-width="1.300"/></svg></div>
    <div class="run on"><svg width="30" height="30" viewBox="0 0 30 30"><path d="M0 0h30v30H0z" fill="#fde2cb"/><path d="M0 30 30 6v24z" fill="#fbeee2"/><path d="M9 2h12v4l-3 1v11l3 2v4H9v-4l3-2V7L9 6z" fill="#d88634"/><path d="M15 2h6v4l-3 1v11l3 2v4h-6z" fill="#ad5f1d"/><text x="28.500" y="29" text-anchor="end" class="pro">PRO</text></svg></div>
  </div>
  <div class="tray">
    <svg width="20" height="22" viewBox="0 0 20 22" fill="none" stroke="#fff" stroke-width="1.500"><circle cx="14" cy="5" r="3.500"/><path d="M9 13c2-5 9-5 10 0"/><circle cx="6" cy="12" r="3.500"/><path d="M1 21c1-6 9-6 10 0"/></svg>
    <svg width="16" height="10" viewBox="0 0 16 10"><path d="M1 9l7-8 7 8" fill="none" stroke="#fff" stroke-width="1.400"/></svg>
    <svg width="20" height="20" viewBox="0 0 20 20"><path d="M1 3l18-2v18H1z" fill="#333" stroke="#ddd" stroke-width="1.500"/><path d="M5 15V8c0-4 8-4 8-1v5M8 8h6" fill="none" stroke="#eee" stroke-width="1.500"/><circle cx="14" cy="14" r="6" fill="#dc2430"/><path d="M14 10v5M14 16v2" stroke="#fff" stroke-width="1.500"/></svg>
    <svg width="20" height="15" viewBox="0 0 20 15"><path d="M5 3h13v10H5V8M19 6v4M3 0v3M1 3h4v3H1zM3 6v4" fill="none" stroke="#fff" stroke-width="1.300"/><path d="M6 8h3v4H6z" fill="#fff"/></svg>
    <svg width="20" height="18" viewBox="0 0 20 18"><path d="M4 9C6 5 12 1 18 1M8 14c0-4 4-8 10-8M12 16c0-3 2-5 6-5" fill="none" stroke="#bbb" stroke-width="1.400"/><circle cx="17" cy="15" r="1.800" fill="#fff"/><path d="M0 18h12L6 7z" fill="#fdc114"/><path d="M6 11v4M6 16v1" stroke="#222" stroke-width="1.400"/></svg>
    <svg width="21" height="18" viewBox="0 0 21 18"><path d="M1 6h3l4-4v14l-4-4H1zM11 6c1 2 1 4 0 6M14 4c2 3 2 7 0 10M17 2c4 4 4 10 0 14" fill="none" stroke="#fff" stroke-width="1.200"/></svg>
    <span>ENG</span>
    <span class="clock">21:20<br>27-02-2020</span>
    <svg width="21" height="20" viewBox="0 0 21 20"><path d="M1 1h19v15h-7l-3 3-3-3H1z" fill="none" stroke="#fff" stroke-width="1.400"/></svg>
    <i></i>
  </div>
</div>
</body>
</html>
```
FILE: styles.css
```css
* { box-sizing: border-box; }
body {
  margin: 0; width: 1920px; height: 1080px; overflow: hidden;
  display: flex; flex-direction: column;
  font: 14px/20px "Open Sans", "Noto Sans", sans-serif;
  letter-spacing: -0.12px; color: #333; background: #fff;
}
svg { display: block; flex: none; }
.defs { position: absolute; }

.titlebar {
  height: 32px; flex: none; background: #505050; padding-left: 3px; color: #d9d9d9;
  display: grid; align-items: center; grid-template-rows: 27px; white-space: nowrap;
  grid-template-columns: 36px 30px 15px 30px 30px 29px 17px 28px 16px 10px 29px 30px 15px 27px 17px 30px 26px 129px 26px 129px 30px 31px 30px 29px 111px 256px 142px 13px 229px 27px 106px 18px 33px 12px 30px 41px 27px 32px 21px;
}
.titlebar > svg:first-child { margin-top: 3px; }
.caret { color: #ddd; }
.caret.dim { color: #aaa; }
.caret.dark { color: #333; }
.logo-text { font: 700 7.500px "Open Sans", sans-serif; fill: #e8892c; letter-spacing: 0; }
.help-text { font: 700 17px "Open Sans", sans-serif; fill: #2756b8; }
.bar { width: 1px; height: 27px; background: #878787; }
.combo { width: 125px; height: 27px; background: #929292; color: #505050; display: flex; align-items: center; padding: 0 3px 0 9px; font-size: 14.500px; }
.combo span { flex: 1; }
.combo svg:first-child { margin: 0 4px 0 -4px; }
.fx { display: flex; align-items: flex-end; font: italic 700 20px/24px "Liberation Serif", serif; color: #1c1c1c; height: 24px; }
.fx small { font-size: 14px; line-height: 16px; }
.title { padding-top: 1px; letter-spacing: .02px; }
.title.doc { letter-spacing: .45px; }
.search { width: 225px; height: 25px; margin-top: -2px; padding: 2px 6px; line-height: 21px; background: #929292; color: #cfcfcf; letter-spacing: .15px; }
.user { letter-spacing: 0; }
.win-min { margin-top: 11px; }

.tabs {
  height: 25px; flex: none; background: #505050; color: #ccc; display: grid; align-items: center; line-height: 25px; white-space: nowrap; letter-spacing: -.08px;
  grid-template-columns: 57px 101px 68px 86px 72px 60px 78px 56px 114px 100px 118px 25px 20px;
}
.file { width: 54px; background: #f08429; color: #fff; padding-left: 15px; }
.active { width: 88px; background: #f6f6f6; color: #444; padding-left: 11px; }

.ribbon { height: 119px; flex: none; background: #f6f6f6; display: flex; padding-top: 1px; white-space: nowrap; }
.group { display: flex; flex-direction: column; border-right: 1px solid #d8d8d8; }
.group .body { height: 98px; padding-top: 1px; display: grid; align-items: start; justify-content: start; }
.name { flex: 1; display: flex; justify-content: center; align-items: center; gap: 8px; }
.big { display: flex; flex-direction: column; align-items: center; text-align: center; padding-top: 3px; }
.big span { margin-top: 5px; }
.big .caret { margin-top: 4px; }
.list div { height: 31px; display: flex; align-items: center; gap: 7px; }
.list .wide, .list .ruled { letter-spacing: .08px; }
.tile { width: 29px; height: 27px; margin: 2px 0; border: 1px solid #cfcfcf; background: #fafafa; display: grid; place-items: center; }
.g-sketch { width: 99px; }
.g-sketch .body { grid-template-columns: 81px 10px; padding-left: 7px; }
.g-sketch .side { margin: 70px 0 0 -3px; }
.g-sketch .big span { margin-top: 7px; padding-left: 2px; }
.g-create { width: 380px; }
.g-create .body { grid-template-columns: 60px 59px 83px 90px 80px; padding-left: 1px; }
.g-create .body > .list { margin-left: 5px; }
.g-modify { width: 452px; }
.g-modify .body { grid-template-columns: 48px 49px 95px 140px 110px; padding-left: 2px; }
.g-modify .body > .list { margin-left: 4px; }
.g-explore { width: 80px; }
.g-explore .body, .g-sim .body, .g-conv .body { grid-template-columns: 100%; }
.g-explore span, .g-work .big span, .g-free .big span, .g-sim span, .g-conv span { margin-top: 6px; }
.g-work { width: 156px; }
.g-work .body { grid-template-columns: 68px 80px; }
.g-work .list { margin-left: 2px; }
.g-work .list div { gap: 7px; }
.c1 { margin-left: 5px; } .c2 { margin-left: 4px; }
.g-pattern { width: 68px; }
.g-pattern .body { grid-template-columns: 31px 31px; padding-left: 2px; align-content: start; }
.g-free { width: 147px; }
.g-free .body { grid-template-columns: 56px 90px; }
.g-free .list { margin-left: 3px; }
.g-free .list div { gap: 6px; }
.g-surface { width: 246px; }
.g-surface .body { grid-template-columns: 79px 126px 30px; padding-left: 7px; }
.g-surface .tiles { display: grid; grid-template-rows: 31px 31px 31px; margin-left: -1px; }
.g-sim { width: 84px; }
.g-conv { width: 92px; }
.g-conv .big { padding-right: 2px; }
.display { width: 43px; height: 27px; margin: 3px 0 0 3px; border: 1px solid #cfcfcf; display: flex; align-items: center; padding-left: 3px; gap: 8px; }

.work { height: 825px; flex: none; display: flex; }
.browser { width: 182px; background: #fff; border-right: 4px solid #595959; font: 12.500px/25px "DejaVu Sans Condensed", "DejaVu Sans", sans-serif; letter-spacing: -.02px; color: #111; }
.panel-head { height: 24px; background: #606060; display: flex; align-items: center; gap: 9px; padding-right: 6px; }
.panel-tab { width: 63px; height: 24px; background: #fff; color: #555; padding-left: 3px; display: flex; align-items: center; justify-content: space-between; padding-right: 7px; letter-spacing: -.1px; }
.panel-head .add { margin: 0 auto 0 -4px; }
.tree { list-style: none; margin: 2px 0 0; padding: 0; background: repeating-linear-gradient(#888 0 1px, transparent 1px 3px) 10px 30px / 1px 132px no-repeat; }
.tree li { height: 25px; display: flex; align-items: center; padding: 1px 0 0 6px; gap: 4px; font-stretch: condensed; }
.tree .root { padding-left: 3px; }
.tree .chev { margin-right: 5px; background: #fff; }
.tree .end i { width: 11px; height: 1px; border-top: 1px dotted #777; margin-left: 5px; margin-right: -2px; }
.tree .end svg { margin-right: 1px; margin-left: -1px; }

.stage { flex: 1; display: flex; flex-direction: column; }
.viewport { position: relative; height: 795px; background: linear-gradient(#8090ab 0, #8e9bb4 15%, #99a4ba 28%, #a0a9bf 43%, #979fb3 62%, #9199aa 71%, #9ea3b0 77%, #b3b6c1 86%, #c6c7cb 100%); }
.vignette { position: absolute; inset: 0;
  background: linear-gradient(90deg, rgba(42,47,56,.78), rgba(46,54,66,.56) 7%, rgba(62,72,84,.38) 15%, rgba(78,88,102,.18) 25%, rgba(85,96,110,0) 36%, rgba(85,96,110,0) 64%, rgba(78,88,102,.18) 75%, rgba(62,72,84,.38) 85%, rgba(46,54,66,.56) 93%, rgba(42,47,56,.78));
  -webkit-mask-image: linear-gradient(#000 0, #000 42%, rgba(0,0,0,.78) 58%, rgba(0,0,0,.42) 74%, rgba(0,0,0,.2) 84%, rgba(0,0,0,.13));
  mask-image: linear-gradient(#000 0, #000 42%, rgba(0,0,0,.78) 58%, rgba(0,0,0,.42) 74%, rgba(0,0,0,.2) 84%, rgba(0,0,0,.13)); }
.scene { position: absolute; inset: 0; width: 1738px; height: 795px; }
.cube-text { font: 700 12px "Liberation Sans", sans-serif; fill: #5f656f; letter-spacing: 0; }
.cube-text.small { font-size: 11px; }
.triad text { font: 11.500px "Liberation Sans", sans-serif; }
.mdi { position: absolute; right: 1px; top: 6px; display: flex; align-items: center; gap: 9px; }
.mdi svg:first-child { margin-top: 5px; }
.navbar { position: absolute; right: 0; top: 145px; width: 34px; height: 230px; border: 1px solid #3f4652; border-radius: 4px; background: #7b7f88; }

.doctabs { height: 30px; background: #606060; color: #d0d0d0; display: grid; align-items: center; line-height: 32px; white-space: nowrap; letter-spacing: -.05px; grid-template-columns: 161px 89px 113px 94px 107px; }
.arrange { width: 151px; height: 30px; border-right: 1px solid #999; display: flex; align-items: center; gap: 10px; padding-left: 5px; }
.arrange svg:last-child { margin-left: 3px; }
.current { height: 30px; background: #f6f6f6; color: #505050; display: flex; align-items: center; justify-content: space-between; padding: 0 14px 0 10px; }

.status { height: 29px; flex: none; background: #f5f5f5; color: #111; display: flex; line-height: 34px; }
.status span { flex: 1; letter-spacing: .05px; }
.status b { font-weight: 400; width: 40px; height: 27px; margin-top: 2px; border-left: 1px solid #ccc; line-height: 30px; padding-left: 10px; }
.status b:last-child { width: 38px; padding-left: 8px; }

.taskbar { height: 50px; flex: none; display: flex; color: #fff; background: linear-gradient(90deg, #262e2e 0, #262929 3%, #222 30%, #1e1e1e 45%, #2b2b2b 52%, #1a1a14 58%, #222 66%, #0b0c0c 70%, #0d0f10 75%, #1c1c1e 80%, #34231c 88%, #201b19 91%, #252d2d 95%, #263130); }
.start { width: 60px; display: grid; place-items: center; }
.cortana { width: 430px; background: #333; display: flex; align-items: center; color: #aaa; padding: 1px 18px 0 11px; gap: 11px; font-size: 17px; letter-spacing: -.2px; }
.cortana span { flex: 1; }
.taskview { width: 63px; display: grid; place-items: center; padding-right: 2px; }
.apps { display: flex; }
.apps div { width: 62px; height: 50px; display: grid; place-items: center; }
.apps .run { background: linear-gradient(#ddd, #ddd) 50% 100% / 51px 3px no-repeat; }
.apps .on { background: linear-gradient(#ddd, #ddd) 50% 100% / 62px 3px no-repeat #525252; }
.skype { font: 700 19px "Open Sans", sans-serif; fill: #fff; }
.pro { font: 700 7px "Open Sans", sans-serif; fill: #e07f27; letter-spacing: 0; }
.tray { margin-left: auto; display: grid; align-items: center; grid-template-columns: 46px 28px 30px 30px 30px 34px 36px 107px 45px 6px; line-height: 23px; letter-spacing: 0; }
.tray > span:not(.clock) { margin-left: -1px; }
.clock { text-align: center; width: 90px; margin-left: 1px; }
.tray i { width: 1px; height: 50px; background: #777; }
```
